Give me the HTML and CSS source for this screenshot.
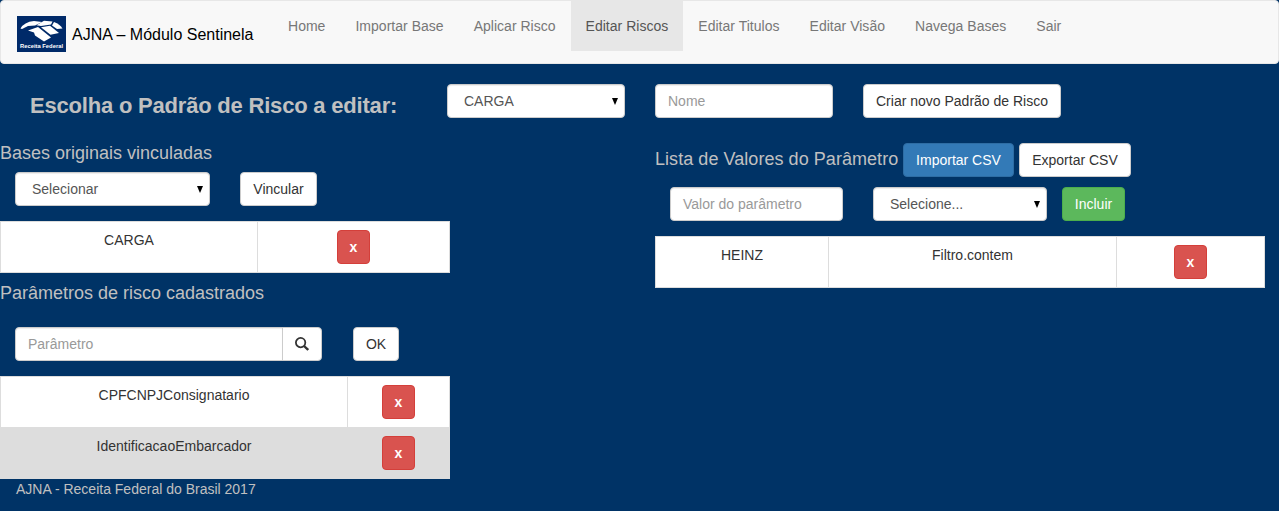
FILE: index.html
```html
<!DOCTYPE html>
<html lang="pt-BR">
<head>
<meta charset="utf-8">
<title>AJNA – Módulo Sentinela</title>
<link rel="stylesheet" href="styles.css">
</head>
<body>
<nav class="navbar">
  <a class="brand">
    <svg class="logo" width="49" height="36" viewBox="0 0 49 36">
      <rect width="49" height="36" fill="#002a69"/>
      <g fill="#fff">
        <path d="M3.5 12.5 Q7 6 17 5 L25 6 L18 9.5 L11 10 L5 13Z"/>
        <path d="M27 4.8 L35.5 5.5 L34 8.5 L24 10 L19.5 9.2Z"/>
        <path d="M37 6 Q43 8 45.5 12.5 L40 13 L35 9.5Z"/>
        <path d="M11 14.5 L21 11 L34 21.5 L27 25.5 L18 19.5 L17 16.5Z"/>
        <path d="M24 11.3 L33 9.8 L42 17 L33.5 18.8Z"/>
      </g>
      <text class="logo-text" x="24.5" y="31.5" text-anchor="middle" textLength="43" lengthAdjust="spacingAndGlyphs">Receita Federal</text>
    </svg>
    <span class="brand-name">AJNA – Módulo Sentinela</span>
  </a>
  <ul class="menu">
    <li>Home</li><li>Importar Base</li><li>Aplicar Risco</li><li class="active">Editar Riscos</li><li>Editar Titulos</li><li>Editar Visão</li><li>Navega Bases</li><li>Sair</li>
  </ul>
</nav>
<main>
  <section class="pattern">
    <h1>Escolha o Padrão de Risco a editar:</h1>
    <div class="control select pattern-select"><span>CARGA</span><i class="arrow"></i></div>
    <div class="control hint name-input">Nome</div>
    <button class="btn create">Criar novo Padrão de Risco</button>
  </section>
  <div class="columns">
    <section class="left">
      <h2>Bases originais vinculadas</h2>
      <div class="form bases">
        <div class="control select base-select"><span>Selecionar</span><i class="arrow"></i></div>
        <button class="btn link">Vincular</button>
      </div>
      <table class="bases-table">
        <colgroup><col class="c-base"><col></colgroup>
        <tr><td>CARGA</td><td><button class="btn danger">x</button></td></tr>
      </table>
      <h2 class="params-title">Parâmetros de risco cadastrados</h2>
      <div class="form params">
        <div class="control hint param-input">Parâmetro</div>
        <button class="btn search"><svg width="14" height="14" viewBox="0 0 14 14"><circle cx="5.6" cy="5.6" r="4.7" fill="none" stroke="#333" stroke-width="1.8"/><path d="M9 9 L13.2 13" stroke="#333" stroke-width="2.4"/></svg></button>
        <button class="btn ok">OK</button>
      </div>
      <table class="params-table">
        <colgroup><col class="c-param"><col></colgroup>
        <tr><td>CPFCNPJConsignatario</td><td><button class="btn danger">x</button></td></tr>
        <tr class="selected"><td>IdentificacaoEmbarcador</td><td><button class="btn danger">x</button></td></tr>
      </table>
    </section>
    <section class="right">
      <div class="values-head">
        <h2>Lista de Valores do Parâmetro</h2>
        <button class="btn primary">Importar CSV</button>
        <button class="btn export">Exportar CSV</button>
      </div>
      <div class="form values">
        <div class="control hint value-input">Valor do parâmetro</div>
        <div class="control select filter-select"><span>Selecione...</span><i class="arrow"></i></div>
        <button class="btn success">Incluir</button>
      </div>
      <table>
        <colgroup><col class="c-value"><col class="c-filter"><col></colgroup>
        <tr><td>HEINZ</td><td>Filtro.contem</td><td><button class="btn danger">x</button></td></tr>
      </table>
    </section>
  </div>
</main>
<footer>AJNA - Receita Federal do Brasil 2017</footer>
</body>
</html>
```
FILE: styles.css
```css
* { box-sizing: border-box; }
body {
  margin: 0;
  height: 511px;
  overflow: hidden;
  background: #003366;
  color: #c0c0c0;
  font: 14px/20px "Liberation Sans", Arial, sans-serif;
}
.navbar {
  display: flex;
  height: 64px;
  border: 1px solid #e7e7e7;
  border-radius: 4px;
  background: #f8f8f8;
}
.brand { display: flex; width: 272px; padding: 15px 0 0 16px; color: #000; }
.logo { display: block; flex: none; }
.logo-text { font: bold 6px "Liberation Sans", Arial, sans-serif; fill: #fff; }
.brand-name { margin: 9px 0 0 6px; font-size: 16px; white-space: nowrap; }
.menu { display: flex; margin: 0; padding: 0; list-style: none; color: #777; letter-spacing: 0.02px; }
.menu li { height: 50px; padding: 15px 15px 0; white-space: nowrap; }
.menu .active { background: #e7e7e7; color: #555; }

h1, h2 { margin: 0; white-space: nowrap; }
h1 { width: 447px; padding: 9px 0 0 30px; font-size: 22px; line-height: 26px; letter-spacing: -0.2px; }
h2 { font-size: 18px; font-weight: 400; line-height: 20px; }

.control {
  display: flex;
  align-items: center;
  height: 34px;
  padding: 0 12px;
  border: 1px solid #ccc;
  border-radius: 4px;
  background: #fff;
  box-shadow: inset 0 1px 1px rgba(0, 0, 0, 0.075);
  color: #555;
  white-space: nowrap;
}
.select { justify-content: space-between; padding: 0 6px 0 16px; }
.hint { color: #999; }
.arrow { border: 3.5px solid transparent; border-top: 7px solid #000; border-bottom: 0; }
.btn {
  height: 34px;
  padding: 0;
  border: 1px solid #ccc;
  border-radius: 4px;
  background: #fff;
  color: #333;
  font: inherit;
  white-space: nowrap;
}
.primary { width: 111px; margin-left: 5px; background: #337ab7; border-color: #2e6da4; color: #fff; }
.success { width: 63px; margin-left: 15px; background: #5cb85c; border-color: #4cae4c; color: #fff; }
.danger { display: block; width: 33px; margin: 0 auto; background: #d9534f; border-color: #d43f3a; color: #fff; font-weight: 700; }

.pattern { display: flex; height: 54px; padding-top: 20px; }
.pattern-select { width: 178px; }
.name-input { width: 178px; margin-left: 30px; }
.create { width: 198px; margin-left: 30px; }

.columns { display: flex; gap: 205px; padding-top: 25px; }
.left { width: 450px; }
.right { width: 610px; }
.form { display: flex; padding-left: 15px; }
.bases { margin: 9px 0 15px; }
.base-select { width: 195px; }
.link { width: 77px; margin-left: 30px; }
.params-title { margin-top: 10px; }
.params { margin: 24px 0 15px; }
.param-input { width: 268px; border-radius: 4px 0 0 4px; }
.search { display: grid; place-items: center; width: 40px; margin-left: -1px; border-radius: 0 4px 4px 0; }
.ok { width: 46px; margin-left: 31px; }
.values-head { display: flex; }
.values-head h2 { width: 243px; padding-top: 6px; letter-spacing: 0.05px; }
.export { width: 112px; margin-left: 5px; }
.values { margin: 10px 0 15px; }
.value-input { width: 173px; }
.filter-select { width: 174px; margin-left: 30px; }

table { width: 100%; border-collapse: collapse; table-layout: fixed; background: #fff; color: #333; }
td { height: 51px; padding: 8px; border: 1px solid #ddd; text-align: center; vertical-align: top; }
.selected { background: #ddd; }
.c-base { width: 257px; }
.c-param { width: 347px; }
.c-value { width: 173px; }
.c-filter { width: 288px; }
footer { padding-left: 16px; }
```
